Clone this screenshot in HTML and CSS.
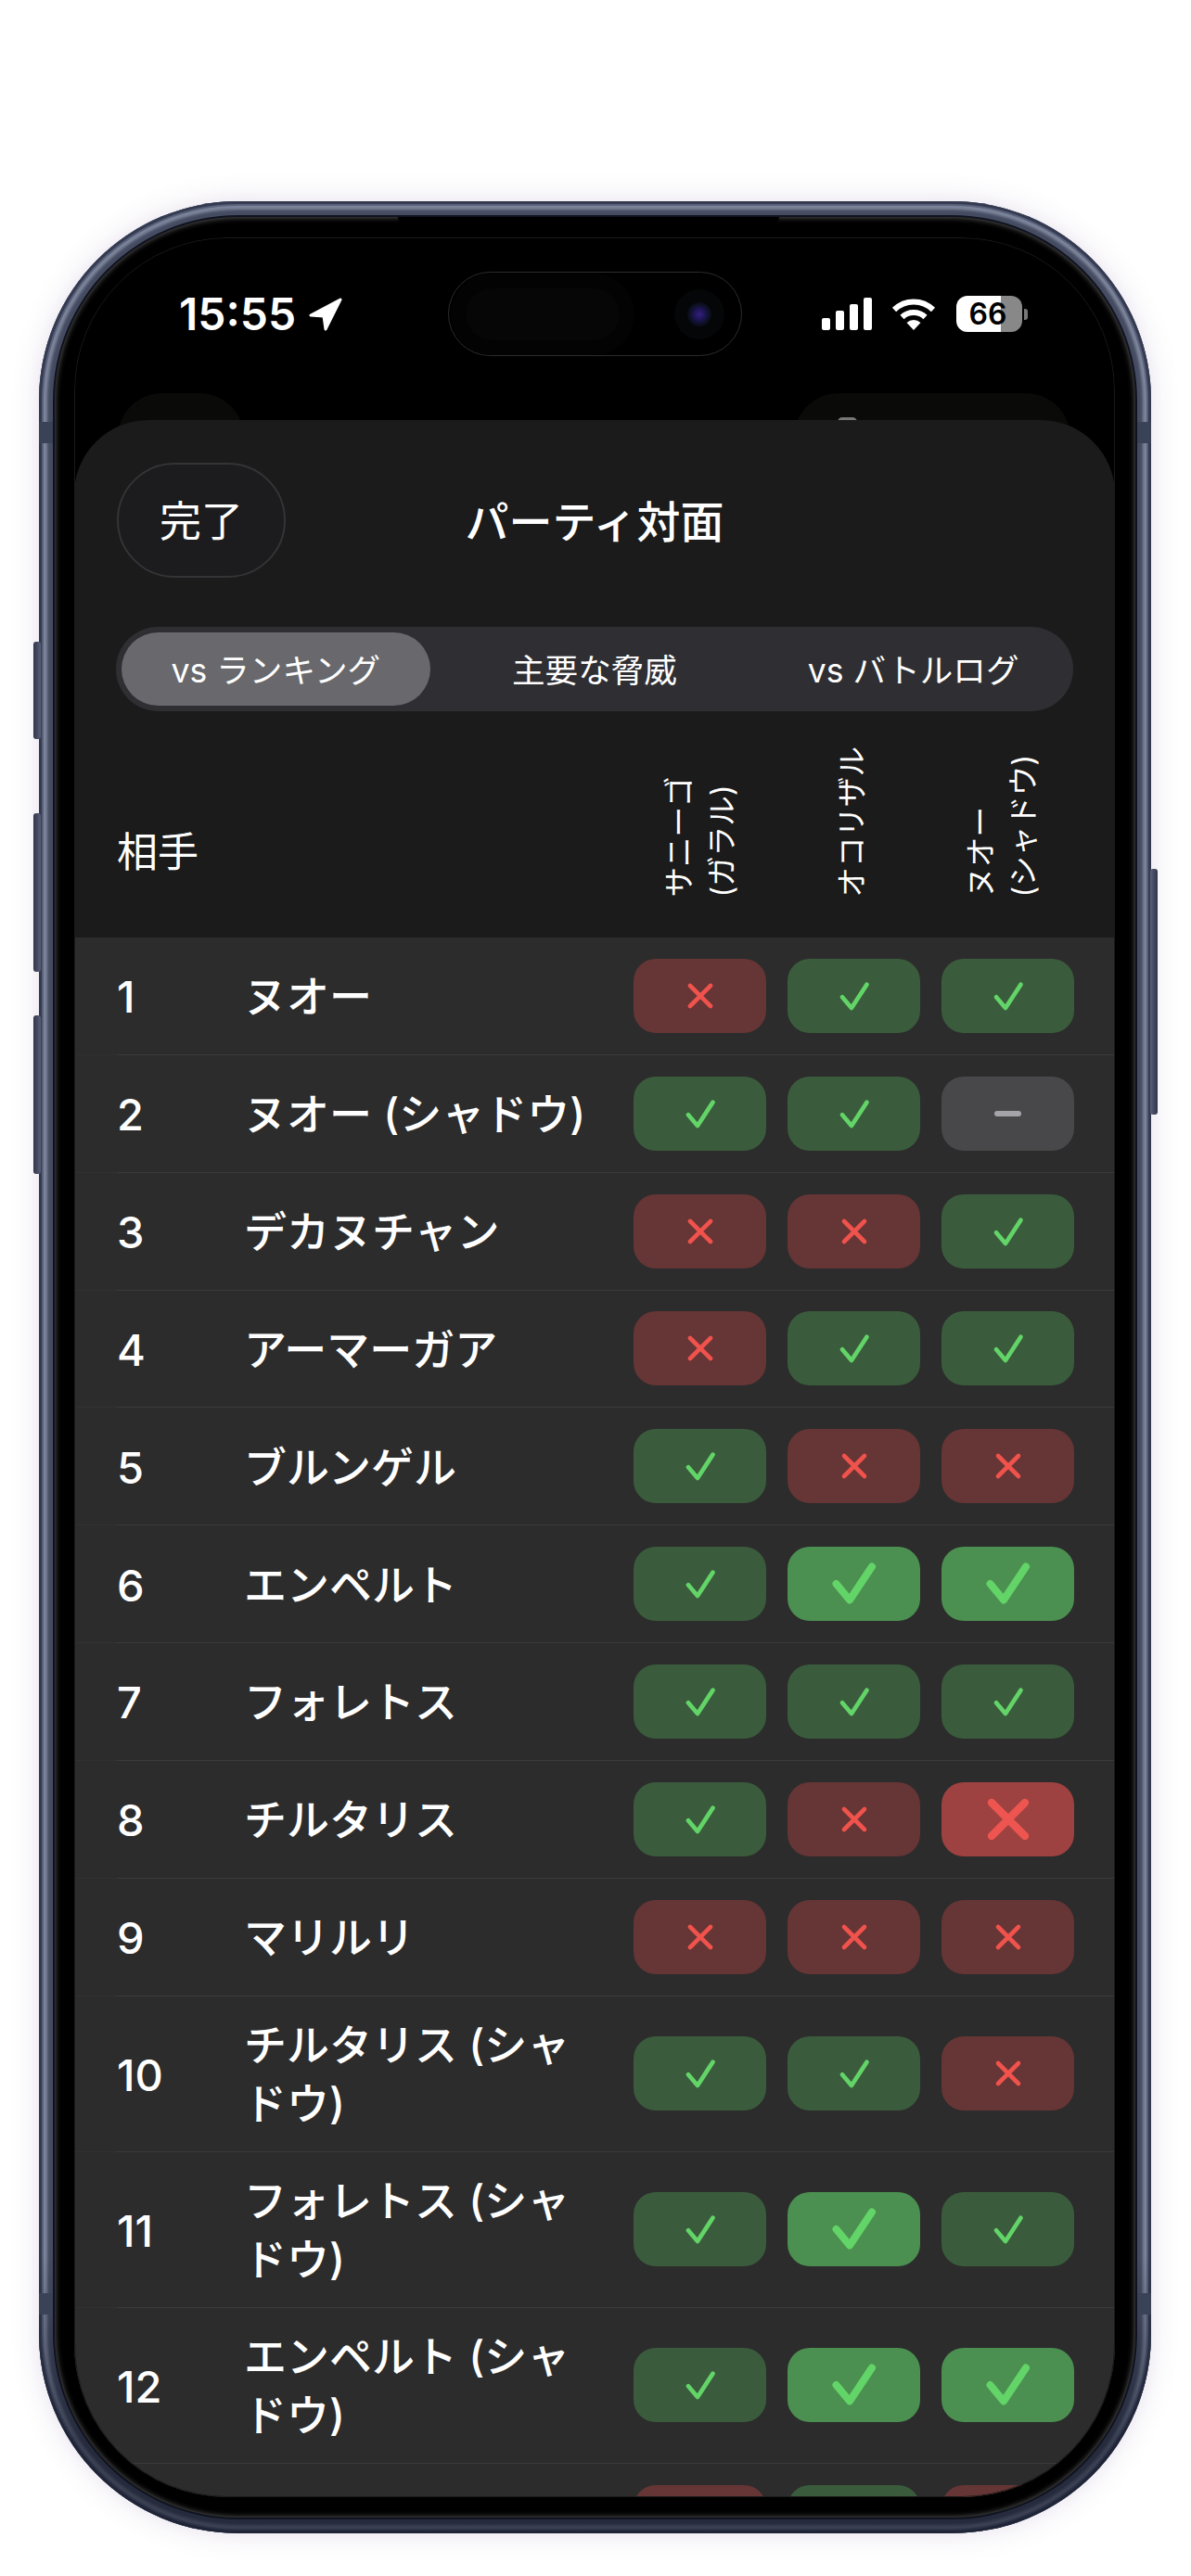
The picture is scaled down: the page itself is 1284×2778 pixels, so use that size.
FILE: index.html
```html
<!DOCTYPE html>
<html>

<head>
  <meta charset="UTF-8">
  <title>パーティ対面</title>
  <link rel="stylesheet" href="styles.css">
</head>

<body>
  <!-- Shared icons for the matchup cells -->
  <svg class="defs" width="0" height="0">
    <symbol id="check" viewBox="-24 -24 48 48">
      <path d="M-13 1.2 L-3 13 L13.5 -12.3" fill="none" stroke="#63d468" stroke-width="4.7" stroke-linecap="round" stroke-linejoin="round" />
    </symbol>
    <symbol id="cross" viewBox="-24 -24 48 48">
      <path d="M-11 -11 L11 11 M11 -11 L-11 11" fill="none" stroke="#f0524c" stroke-width="4.6" stroke-linecap="round" />
    </symbol>
    <symbol id="check-big" viewBox="-24 -24 48 48">
      <path d="M-19.5 0 L-5 17.5 L19 -18.5" fill="none" stroke="#63d468" stroke-width="8" stroke-linecap="round" stroke-linejoin="round" />
    </symbol>
    <symbol id="cross-big" viewBox="-24 -24 48 48">
      <path d="M-18 -18 L18 18 M18 -18 L-18 18" fill="none" stroke="#ee5550" stroke-width="8.4" stroke-linecap="round" />
    </symbol>
  </svg>

  <div class="page">
    <div class="phone">
      <span class="side-btn action"></span>
      <span class="side-btn vol-up"></span>
      <span class="side-btn vol-down"></span>
      <span class="side-btn power"></span>
      <span class="band band-tl"></span>
      <span class="band band-tr"></span>
      <span class="band band-bl"></span>
      <span class="band band-br"></span>

      <div class="bezel">
        <span class="speaker"></span>
        <div class="screen">

          <div class="status-bar">
            <div class="status-left">
              <span class="time">15:55</span>
              <svg class="arrow" width="37" height="36" viewBox="0 0 37 36">
                <path d="M35 2 L3 19 L17 20 L19 34 Z" fill="#fff" stroke="#fff" stroke-width="3" stroke-linejoin="round" />
              </svg>
            </div>
            <div class="island">
              <span class="island-pill"></span>
              <span class="lens"></span>
            </div>
            <div class="status-right">
              <div class="signal">
                <span class="bar-1"></span>
                <span class="bar-2"></span>
                <span class="bar-3"></span>
                <span class="bar-4"></span>
              </div>
              <svg class="wifi" width="48" height="36" viewBox="0 0 48 36">
                <path d="M3 13 A30 30 0 0 1 45 13" fill="none" stroke="#fff" stroke-width="6" />
                <path d="M11.5 21 A18 18 0 0 1 36.5 21" fill="none" stroke="#fff" stroke-width="6" />
                <path d="M24 35 L16.5 27 A11 11 0 0 1 31.5 27 Z" fill="#fff" />
              </svg>
              <div class="battery">66</div>
              <span class="battery-nub"></span>
            </div>
          </div>

          <!-- Page behind the sheet, mostly hidden -->
          <span class="ghost ghost-left"></span>
          <span class="ghost ghost-right"><span class="ghost-icon"></span></span>

          <div class="sheet">
            <div class="sheet-header">
              <button class="done">完了</button>
              <div class="sheet-title">パーティ対面</div>
            </div>

            <div class="segments">
              <div class="segment selected">vs ランキング</div>
              <div class="segment">主要な脅威</div>
              <div class="segment">vs バトルログ</div>
            </div>

            <div class="table-head">
              <div class="opponent-label">相手</div>
              <div class="party">
                <div class="party-col first"><span class="party-name">サニーゴ<br>(ガラル)</span></div>
                <div class="party-col"><span class="party-name">オコリザル</span></div>
                <div class="party-col last"><span class="party-name">ヌオー<br>(シャドウ)</span></div>
              </div>
            </div>

            <div class="table-body">
              <div class="row">
                <div class="row-inner">
                  <div class="rank">1</div>
                  <div class="name">ヌオー</div>
                  <div class="party">
                    <div class="cell bad"><svg><use href="#cross" /></svg></div>
                    <div class="cell good"><svg><use href="#check" /></svg></div>
                    <div class="cell good"><svg><use href="#check" /></svg></div>
                  </div>
                </div>
              </div>
              <div class="row">
                <div class="row-inner">
                  <div class="rank">2</div>
                  <div class="name">ヌオー (シャドウ)</div>
                  <div class="party">
                    <div class="cell good"><svg><use href="#check" /></svg></div>
                    <div class="cell good"><svg><use href="#check" /></svg></div>
                    <div class="cell neutral"><span class="minus"></span></div>
                  </div>
                </div>
              </div>
              <div class="row">
                <div class="row-inner">
                  <div class="rank">3</div>
                  <div class="name">デカヌチャン</div>
                  <div class="party">
                    <div class="cell bad"><svg><use href="#cross" /></svg></div>
                    <div class="cell bad"><svg><use href="#cross" /></svg></div>
                    <div class="cell good"><svg><use href="#check" /></svg></div>
                  </div>
                </div>
              </div>
              <div class="row">
                <div class="row-inner">
                  <div class="rank">4</div>
                  <div class="name">アーマーガア</div>
                  <div class="party">
                    <div class="cell bad"><svg><use href="#cross" /></svg></div>
                    <div class="cell good"><svg><use href="#check" /></svg></div>
                    <div class="cell good"><svg><use href="#check" /></svg></div>
                  </div>
                </div>
              </div>
              <div class="row">
                <div class="row-inner">
                  <div class="rank">5</div>
                  <div class="name">ブルンゲル</div>
                  <div class="party">
                    <div class="cell good"><svg><use href="#check" /></svg></div>
                    <div class="cell bad"><svg><use href="#cross" /></svg></div>
                    <div class="cell bad"><svg><use href="#cross" /></svg></div>
                  </div>
                </div>
              </div>
              <div class="row">
                <div class="row-inner">
                  <div class="rank">6</div>
                  <div class="name">エンペルト</div>
                  <div class="party">
                    <div class="cell good"><svg><use href="#check" /></svg></div>
                    <div class="cell great"><svg><use href="#check-big" /></svg></div>
                    <div class="cell great"><svg><use href="#check-big" /></svg></div>
                  </div>
                </div>
              </div>
              <div class="row">
                <div class="row-inner">
                  <div class="rank">7</div>
                  <div class="name">フォレトス</div>
                  <div class="party">
                    <div class="cell good"><svg><use href="#check" /></svg></div>
                    <div class="cell good"><svg><use href="#check" /></svg></div>
                    <div class="cell good"><svg><use href="#check" /></svg></div>
                  </div>
                </div>
              </div>
              <div class="row">
                <div class="row-inner">
                  <div class="rank">8</div>
                  <div class="name">チルタリス</div>
                  <div class="party">
                    <div class="cell good"><svg><use href="#check" /></svg></div>
                    <div class="cell bad"><svg><use href="#cross" /></svg></div>
                    <div class="cell worst"><svg><use href="#cross-big" /></svg></div>
                  </div>
                </div>
              </div>
              <div class="row">
                <div class="row-inner">
                  <div class="rank">9</div>
                  <div class="name">マリルリ</div>
                  <div class="party">
                    <div class="cell bad"><svg><use href="#cross" /></svg></div>
                    <div class="cell bad"><svg><use href="#cross" /></svg></div>
                    <div class="cell bad"><svg><use href="#cross" /></svg></div>
                  </div>
                </div>
              </div>
              <div class="row tall">
                <div class="row-inner">
                  <div class="rank">10</div>
                  <div class="name">チルタリス (シャドウ)</div>
                  <div class="party">
                    <div class="cell good"><svg><use href="#check" /></svg></div>
                    <div class="cell good"><svg><use href="#check" /></svg></div>
                    <div class="cell bad"><svg><use href="#cross" /></svg></div>
                  </div>
                </div>
              </div>
              <div class="row tall">
                <div class="row-inner">
                  <div class="rank">11</div>
                  <div class="name">フォレトス (シャドウ)</div>
                  <div class="party">
                    <div class="cell good"><svg><use href="#check" /></svg></div>
                    <div class="cell great"><svg><use href="#check-big" /></svg></div>
                    <div class="cell good"><svg><use href="#check" /></svg></div>
                  </div>
                </div>
              </div>
              <div class="row tall">
                <div class="row-inner">
                  <div class="rank">12</div>
                  <div class="name">エンペルト (シャドウ)</div>
                  <div class="party">
                    <div class="cell good"><svg><use href="#check" /></svg></div>
                    <div class="cell great"><svg><use href="#check-big" /></svg></div>
                    <div class="cell great"><svg><use href="#check-big" /></svg></div>
                  </div>
                </div>
              </div>
              <div class="row">
                <div class="row-inner">
                  <div class="rank"></div>
                  <div class="name"></div>
                  <div class="party">
                    <div class="cell bad"></div>
                    <div class="cell good"></div>
                    <div class="cell bad"></div>
                  </div>
                </div>
              </div>
            </div>
          </div>

        </div>
      </div>
    </div>
  </div>
</body>

</html>
```

FILE: styles.css
```css
* {
  box-sizing: border-box;
}

body {
  margin: 0;
  background-color: #fff;
  font-family: Inter, "Noto Sans CJK JP", sans-serif;
  color: #fff;
}

.defs {
  position: absolute;
}

.page {
  height: 2778px;
  padding: 217px 0 0 42px;
  overflow: hidden;
}

/* Device frame */
.phone {
  position: relative;
  width: 1199px;
  height: 2515px;
  padding: 17px;
  border-radius: 215px;
  background-color: #454c62;
  box-shadow:
    0 0 30px rgba(120, 95, 150, 0.2),
    inset 0 0 0 3px #343b51,
    inset 0 0 0 5px #59617a,
    inset 0 0 3px 9px #7d859b;
}

/* Metal gets darker towards the bottom edge */
.phone::before {
  content: "";
  position: absolute;
  inset: 0;
  border-radius: inherit;
  background: linear-gradient(rgba(16, 20, 36, 0) 88%, rgba(16, 20, 36, 0.6) 96%);
}

.side-btn {
  position: absolute;
  width: 8px;
  background: linear-gradient(90deg, #2f3549, #5a6178);
  border-radius: 3px;
}

.action {
  left: -6px;
  top: 475px;
  height: 105px;
}

.vol-up {
  left: -6px;
  top: 660px;
  height: 171px;
}

.vol-down {
  left: -6px;
  top: 878px;
  height: 171px;
}

.power {
  right: -7px;
  top: 720px;
  height: 265px;
  background: linear-gradient(270deg, #2f3549, #5a6178);
}

.band {
  position: absolute;
  width: 16px;
  height: 23px;
  background-color: #3a4258;
}

.band-tl {
  left: 0;
  top: 238px;
}

.band-tr {
  right: 0;
  top: 238px;
}

.band-bl {
  left: 0;
  top: 2256px;
}

.band-br {
  right: 0;
  top: 2256px;
}

.bezel {
  position: relative;
  width: 100%;
  height: 100%;
  padding: 22px 22px 22px 21px;
  border-radius: 198px;
  background-color: #000;
  box-shadow:
    0 0 0 2px #10131f,
    inset 0 0 6px rgba(190, 190, 190, 0.55);
}

.speaker {
  position: absolute;
  left: 370px;
  top: 0;
  width: 411px;
  height: 8px;
  background-color: #000;
  border-radius: 0 0 8px 8px;
}

.screen {
  position: relative;
  height: 100%;
  border-radius: 165px;
  background-color: #000;
  overflow: hidden;
}

/* Hairline round the display, above the sheet edge */
.screen::after {
  content: "";
  position: absolute;
  inset: 0;
  border: 1px solid #1a1a1a;
  border-radius: inherit;
  pointer-events: none;
}

/* Status bar */
.status-bar {
  display: flex;
  align-items: center;
  height: 197px;
  padding: 37px 0 69px 113px;
}

.status-left {
  display: flex;
  align-items: center;
  gap: 13px;
  width: 290px;
}

.time {
  font-size: 48px;
  font-weight: 600;
  line-height: 1;
}

.island {
  display: flex;
  align-items: center;
  width: 317px;
  height: 91px;
  padding-left: 18px;
  border: 1px solid #2c2c2e;
  border-radius: 46px;
  background-color: #000;
}

.island-pill {
  width: 166px;
  height: 56px;
  border-radius: 28px;
  background-color: #060606;
  box-shadow: 0 0 0 16px #030303;
}

.lens {
  width: 26px;
  height: 26px;
  margin-left: 73px;
  border-radius: 50%;
  background: radial-gradient(circle, #33207e 0, #1c1450 35%, #0c1020 60%, #05070c 100%);
  box-shadow: 0 0 0 14px #040608;
}

.status-right {
  display: flex;
  align-items: center;
  margin-left: 86px;
}

.signal {
  display: flex;
  align-items: flex-end;
  gap: 6px;
  height: 35px;
}

.signal span {
  width: 9px;
  border-radius: 2px;
  background-color: #fff;
}

.bar-1 {
  height: 13px;
}

.bar-2 {
  height: 21px;
}

.bar-3 {
  height: 28px;
}

.bar-4 {
  height: 35px;
}

.wifi {
  margin-left: 21px;
}

.battery {
  width: 71px;
  height: 39px;
  margin-left: 22px;
  padding-right: 3px;
  border-radius: 12px;
  background: linear-gradient(90deg, #fff 48px, #888 48px);
  color: #000;
  font-size: 32px;
  font-weight: 600;
  line-height: 39px;
  text-align: center;
}

.battery-nub {
  width: 4px;
  height: 12px;
  margin-left: 2px;
  border-radius: 0 3px 3px 0;
  background-color: #777;
}

.ghost {
  position: absolute;
  top: 168px;
  height: 124px;
  border-radius: 48px;
  background-color: #0a0b08;
}

.ghost-left {
  left: 47px;
  width: 136px;
}

.ghost-right {
  left: 776px;
  width: 298px;
}

.ghost-icon {
  position: absolute;
  left: 47px;
  top: 26px;
  width: 21px;
  height: 12px;
  border-radius: 5px;
  background-color: #777;
}

/* Sheet */
.sheet {
  position: relative;
  height: 2240px;
  border-radius: 80px 80px 0 0;
  background-color: #1b1b1b;
  overflow: hidden;
}

.sheet-header {
  position: relative;
  display: flex;
  align-items: center;
  justify-content: center;
  height: 124px;
  margin-top: 46px;
}

.done {
  position: absolute;
  left: 46px;
  top: 0;
  width: 182px;
  height: 124px;
  padding: 0 0 4px;
  border: 2px solid #343436;
  border-radius: 62px;
  background-color: #1c1c1e;
  color: #fff;
  font-family: inherit;
  font-size: 45px;
}

.sheet-title {
  padding-bottom: 4px;
  font-size: 47px;
  font-weight: 500;
}

.segments {
  display: grid;
  grid-template-columns: repeat(3, 1fr);
  gap: 11px;
  height: 91px;
  margin: 53px 45px 0 45px;
  padding: 6px;
  border-radius: 46px;
  background-color: #2f2f33;
}

.segment {
  display: flex;
  align-items: center;
  justify-content: center;
  padding-bottom: 3px;
  border-radius: 40px;
  font-size: 35.6px;
}

.segment.selected {
  background-color: #69696d;
}

/* Table */
.table-head {
  display: flex;
  align-items: flex-end;
  justify-content: space-between;
  height: 244px;
  padding: 0 46px 43px 46px;
}

.opponent-label {
  margin-bottom: 22px;
  font-size: 44px;
  line-height: 1.2;
}

.party {
  display: flex;
  flex: none;
  gap: 23px;
}

.party-col {
  display: flex;
  justify-content: center;
  width: 143px;
}

.party-col.first {
  padding-left: 6px;
}

.party-col.last {
  padding-right: 8px;
}

.party-name {
  writing-mode: vertical-rl;
  text-orientation: sideways;
  transform: rotate(180deg);
  font-size: 32.5px;
  line-height: 46px;
}

.table-body {
  background-color: #2c2c2c;
}

.row {
  height: 126.85px;
  padding-left: 46px;
  box-shadow: inset 0 -1px 0 #313131;
}

.row.tall {
  height: 168px;
}

.row-inner {
  display: flex;
  align-items: center;
  height: 100%;
  padding-right: 46px;
  border-bottom: 1px solid #3b3b3b;
}

.rank {
  flex: none;
  width: 137px;
  padding-top: 2px;
  font-size: 47px;
  font-weight: 500;
}

.name {
  flex: none;
  width: 375px;
  margin-right: 45px;
  padding-top: 2px;
  font-size: 46px;
  font-weight: 500;
  line-height: 63px;
}

.cell {
  display: flex;
  align-items: center;
  justify-content: center;
  width: 143px;
  height: 80px;
  border-radius: 24px;
}

.cell svg {
  width: 48px;
  height: 48px;
}

.good {
  background-color: #3a5c3c;
}

.great {
  background-color: #4b9050;
}

.bad {
  background-color: #663535;
}

.worst {
  background-color: #9d4240;
}

.neutral {
  background-color: #48484a;
}

.minus {
  width: 29px;
  height: 6px;
  border-radius: 3px;
  background-color: #a5a5a9;
}
```
